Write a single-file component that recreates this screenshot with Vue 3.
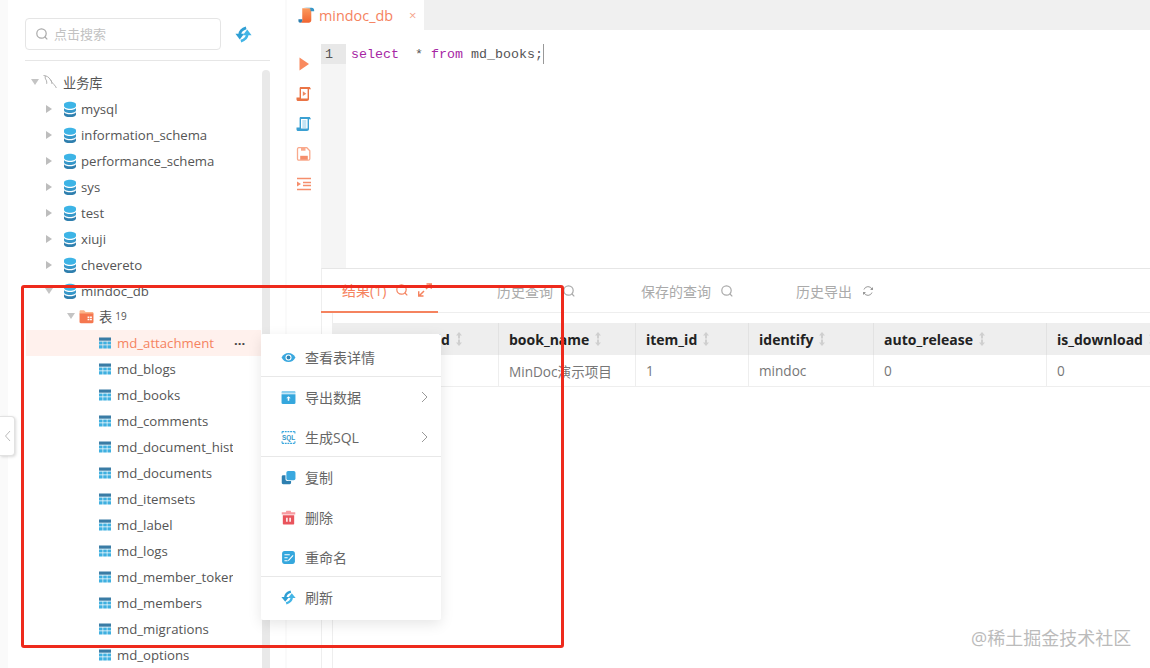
<script setup>
const tables = ['md_attachment', 'md_blogs', 'md_books', 'md_comments', 'md_document_history', 'md_documents', 'md_itemsets', 'md_label', 'md_logs', 'md_member_token', 'md_members', 'md_migrations', 'md_options']
const databases = ['mysql', 'information_schema', 'performance_schema', 'sys', 'test', 'xiuji', 'chevereto']

const menu = [
  [{ icon: 'i-eye', label: '查看表详情' }],
  [{ icon: 'i-export', label: '导出数据', more: true }, { icon: 'i-sql', label: '生成SQL', more: true }],
  [{ icon: 'i-copy', label: '复制' }, { icon: 'i-trash', label: '删除' }, { icon: 'i-rename', label: '重命名' }],
  [{ icon: 'i-sync', label: '刷新' }]
]

const tools = ['i-play', 'i-scroll-run', 'i-scroll-doc', 'i-save', 'i-format']

const resultTabs = [
  { label: '结果(1)', icons: ['i-search', 'i-expand'], active: true },
  { label: '历史查询', icons: ['i-search'] },
  { label: '保存的查询', icons: ['i-search'] },
  { label: '历史导出', icons: ['i-reload'] }
]

const columns = [
  { name: 'book_id', value: '' },
  { name: 'book_name', value: 'MinDoc演示项目' },
  { name: 'item_id', value: '1' },
  { name: 'identify', value: 'mindoc' },
  { name: 'auto_release', value: '0' },
  { name: 'is_download', value: '0' }
]
</script>

<template>
  <div class="page">
    <svg class="sprites" width="0" height="0">
      <defs>
        <linearGradient id="g-scroll" x1="0" y1="0" x2="0" y2="1">
          <stop offset="0" stop-color="#fb9a5d" />
          <stop offset="1" stop-color="#f0632f" />
        </linearGradient>
        <symbol id="i-db" viewBox="0 0 14 16">
          <path d="M1 3.400C1 1.800 3.700.7 7 .7s6 1.100 6 2.700v1.700C13 6.700 10.300 7.800 7 7.800S1 6.700 1 5.100z" fill="#3db4e6" />
          <path d="M1 7.100c1 1.400 3.300 2 6 2s5-.6 6-2v2.200C13 11 10.300 12 7 12s-6-1-6-2.700z" fill="#3597c9" />
          <path d="M1 11.200c1 1.400 3.300 2 6 2s5-.6 6-2v2.200C13 15 10.300 16 7 16s-6-1-6-2.600z" fill="#2f7fae" />
        </symbol>
        <symbol id="i-table" viewBox="0 0 12 12">
          <rect x="0" y="0.500" width="12" height="3.200" fill="#3a7ca5" />
          <path d="M0 4.600h3.600v3H0zM4.200 4.600h3.600v3H4.200zM8.400 4.600H12v3H8.400zM0 8.300h3.600v3.200H0zM4.200 8.300h3.600v3.200H4.200zM8.400 8.300H12v3.200H8.400z" fill="#3fb0e0" />
        </symbol>
        <symbol id="i-folder" viewBox="0 0 14 14">
          <path d="M.5 2.500c0-.8.5-1.300 1.200-1.300h3l1.500 1.500h6c.8 0 1.300.5 1.300 1.200V5H.5z" fill="#fbb48b" />
          <path d="M.5 4.300h13v7.900c0 .7-.5 1.100-1.200 1.100H1.700c-.7 0-1.200-.4-1.200-1.100z" fill="#f5774f" />
          <path d="M8 7h1.700v1.500H8zM10.300 7H12v1.500h-1.700zM8 9.100h1.700v1.500H8zM10.300 9.100H12v1.500h-1.700z" fill="#fff" />
        </symbol>
        <symbol id="i-dolphin" viewBox="0 0 16 16">
          <path d="M1.500 1.500c3 .2 5.300 1.500 6.800 4 1 1.800 2 3.700 3.700 5.200M3.500 1.800c-.7 1.600-.3 3 .8 4.400.5 1.300.6 2.400.4 3.600M8.300 5.500c1.200 1.300 1.600 2.700 1.400 4.200M12 10.700c1 .7 1.600 1.600 2.300 3.300" fill="none" stroke="#a8a8a8" stroke-width=".9" />
        </symbol>
        <symbol id="i-sync" viewBox="0 0 16 16">
          <path d="M10.500 1.800C7 2.800 4.800 4.500 4.500 8" fill="none" stroke="#2f9fd4" stroke-width="2.600" />
          <path d="M.4 7.400h8.200L4.500 12.600z" fill="#2f9fd4" />
          <path d="M5.500 14.200C9 13.200 11.200 11.500 11.500 8" fill="none" stroke="#43b5e6" stroke-width="2.600" />
          <path d="M7.400 8.600h8.200L11.500 3.400z" fill="#43b5e6" />
        </symbol>
        <symbol id="i-eye" viewBox="0 0 14 14">
          <path d="M.5 7C2 4.200 4.200 2.800 7 2.800S12 4.200 13.500 7C12 9.800 9.800 11.200 7 11.200S2 9.800.5 7z" fill="#3aa8df" />
          <circle cx="7" cy="7" r="2.800" fill="#fff" />
          <circle cx="7" cy="7" r="1.800" fill="#2c84b6" />
        </symbol>
        <symbol id="i-export" viewBox="0 0 14 14">
          <path d="M1.500 1h11c.6 0 1 .4 1 1v1.300H.5V2c0-.6.4-1 1-1z" fill="#8ed0ef" />
          <path d="M.5 4h13v8c0 .6-.4 1-1 1h-11c-.6 0-1-.4-1-1z" fill="#35a7dd" />
          <path d="M6.300 10V7.800H4.900L7 5.800l2.100 2H7.700V10z" fill="#fff" />
        </symbol>
        <symbol id="i-sql" viewBox="0 0 14 14">
          <path d="M1 1.500h12M1 12.500h12M1 1.500v2M13 1.500v2M1 10.500v2M13 10.500v2" fill="none" stroke="#3aa8df" stroke-width="1" stroke-dasharray="1.800 .7" />
          <text x="7" y="9.200" text-anchor="middle" font-family="Liberation Sans, sans-serif" font-size="6" font-weight="700" fill="#3597c9">SQL</text>
        </symbol>
        <symbol id="i-copy" viewBox="0 0 14 14">
          <rect x="5" y="1" width="8.500" height="8.500" rx="1.600" fill="#3aa8df" />
          <path d="M2 5h2.200v3.500c0 1.200.6 1.800 1.800 1.800h3.400V12c0 .7-.5 1.200-1.200 1.200H2c-.8 0-1.300-.5-1.300-1.200V6.300C.7 5.500 1.200 5 2 5z" fill="#2d7fb0" />
        </symbol>
        <symbol id="i-trash" viewBox="0 0 14 14">
          <path d="M5 .8h4l.5 1.200h3.800v2.300H.7V2h3.800z" fill="#f79aa0" />
          <path d="M1.700 5h10.600v7.500c0 .6-.4 1-1 1H2.700c-.6 0-1-.4-1-1z" fill="#e9545c" />
          <path d="M4.800 7.300h1.400v3.600H4.800zM7.800 7.300h1.400v3.600H7.800z" fill="#fff" />
        </symbol>
        <symbol id="i-rename" viewBox="0 0 14 14">
          <rect x="1" y="1" width="12" height="12" rx="2.400" fill="#35a7dd" />
          <path d="M3.200 4.500h5M3.200 7.200h3M3.200 10h3M6.800 10l4.500-5" fill="none" stroke="#fff" stroke-width="1" />
        </symbol>
        <symbol id="i-file" viewBox="0 0 16 16">
          <path d="M4 1.200h8.500v11.300c0 1.400-1 2.300-2.300 2.300H2C3.300 14.800 4 14 4 12.800z" fill="url(#g-scroll)" />
          <path d="M5 .8h8c1.300 0 2.200.9 2.200 2.200v1h-3.400V2.400c0-.5-.3-1-.8-1.200z" fill="#3597c9" />
          <path d="M.4 11.500H4v1.300c0 1.200-.7 2-2 2-.9 0-1.700-.6-1.600-1.800z" fill="#2f7fae" />
        </symbol>
        <symbol id="i-play" viewBox="0 0 16 16">
          <path d="M3.500 1.500 13 8l-9.500 6.500z" fill="#f98a5f" />
        </symbol>
        <symbol id="i-scroll-run" viewBox="0 0 16 16">
          <path d="M4.500 1h9.300l1.200 2.200h-2v9.800c0 1.200-.8 2-2 2H2c-.9 0-1.500-.6-1.500-1.500V11.500h3.100V2.500c0-.9.300-1.500.9-1.500z" fill="#ea7445" />
          <path d="M5 3h6.600v9.500H5z" fill="#fff" />
          <path d="M6.800 5.300 10.300 7.700l-3.500 2.400z" fill="#ee8a63" />
        </symbol>
        <symbol id="i-scroll-doc" viewBox="0 0 16 16">
          <path d="M4.500 1h9.300l1.200 2.200h-2v9.800c0 1.200-.8 2-2 2H2c-.9 0-1.500-.6-1.500-1.500V11.500h3.100V2.500c0-.9.300-1.500.9-1.500z" fill="#3ba0d2" />
          <path d="M5 3h6.600v9.500H5z" fill="#fff" />
          <path d="M6.300 5h4M6.300 7h4M6.300 9h4M6.300 11h4" stroke="#7cc3e6" stroke-width=".9" />
        </symbol>
        <symbol id="i-save" viewBox="0 0 16 16">
          <path d="M2.800 1.700h8l3 3v8c0 .9-.6 1.500-1.400 1.500H2.800c-.8 0-1.300-.6-1.300-1.500V3.200c0-.9.500-1.500 1.300-1.500z" fill="#fff" stroke="#f9a98c" stroke-width="1.300" />
          <path d="M5 2h4.500v2.700H5z" fill="#f9a98c" />
          <path d="M4.200 9.800h7.600v4H4.200z" fill="#f58e6c" />
        </symbol>
        <symbol id="i-format" viewBox="0 0 16 16">
          <path d="M1 2.500h14M7 6.500h8M7 9.500h8M1 13.500h14" stroke="#f58e6c" stroke-width="1.500" />
          <path d="M1 5.500 5 8l-4 2.500z" fill="#f58e6c" />
        </symbol>
        <symbol id="i-search" viewBox="0 0 14 14">
          <circle cx="6.500" cy="6.500" r="4.700" fill="none" stroke="currentColor" stroke-width="1.200" />
          <path d="M10 10l2.300 2.300" stroke="currentColor" stroke-width="1.200" />
        </symbol>
        <symbol id="i-expand" viewBox="0 0 14 14">
          <path d="M8 6l4.500-4.500M8.500 1h4.800v4.800M6 8l-4.500 4.500M.7 8.200V13h4.800" fill="none" stroke="#f5835f" stroke-width="1.500" />
        </symbol>
        <symbol id="i-reload" viewBox="0 0 14 14">
          <path d="M11 5.200A4.300 4.300 0 0 0 3 5.500M3 8.800a4.300 4.300 0 0 0 8-.3" fill="none" stroke="#999" stroke-width="1" />
          <path d="M12 3v3H9zM2 11V8h3z" fill="#999" />
        </symbol>
        <symbol id="i-sort" viewBox="0 0 8 16">
          <path d="M4 1 7 4.500H5V7.500H3V4.500H1zM3 8.500h2v3h2L4 15l-3-3.500h2z" fill="#cfcfcf" />
        </symbol>
      </defs>
    </svg>

    <aside class="sidebar">
      <div class="search-row">
        <div class="search-box">
          <svg class="search-icon"><use href="#i-search" /></svg>
          <span>点击搜索</span>
        </div>
        <svg class="sync"><use href="#i-sync" /></svg>
      </div>

      <div class="tree-wrap">
        <div class="tree">
          <div class="row lv0">
            <i class="caret down"></i>
            <svg class="ico"><use href="#i-dolphin" /></svg>
            <span class="name">业务库</span>
          </div>
          <div v-for="db in databases" :key="db" class="row lv1">
            <i class="caret"></i>
            <svg class="ico"><use href="#i-db" /></svg>
            <span class="name">{{ db }}</span>
          </div>
          <div class="row lv1">
            <i class="caret down"></i>
            <svg class="ico"><use href="#i-db" /></svg>
            <span class="name">mindoc_db</span>
          </div>
          <div class="row lv2">
            <i class="caret down"></i>
            <svg class="ico"><use href="#i-folder" /></svg>
            <span class="name">表</span>
            <span class="count">19</span>
          </div>
          <div v-for="(t, i) in tables" :key="t" :class="['row', 'lv3', { active: i === 0 }]">
            <svg class="ico"><use href="#i-table" /></svg>
            <span class="name">{{ t }}</span>
            <span v-if="i === 0" class="dots">···</span>
          </div>
        </div>
        <div class="scroll-thumb"></div>
      </div>
    </aside>

    <main class="main">
      <div class="tabbar">
        <div class="file-tab">
          <svg class="file-ico"><use href="#i-file" /></svg>
          <span>mindoc_db</span>
          <span class="close">×</span>
        </div>
      </div>

      <div class="editor">
        <div class="tools">
          <svg v-for="t in tools" :key="t" class="tool"><use :href="`#${t}`" /></svg>
        </div>
        <div class="gutter"><div class="line-no">1</div></div>
        <div class="code">
          <span class="kw">select</span>&nbsp;&nbsp;* <span class="kw">from</span> md_books;<span class="cursor"></span>
        </div>
      </div>

      <div class="results">
        <div class="res-tabs">
          <div v-for="tab in resultTabs" :key="tab.label" :class="['res-tab', { active: tab.active }]">
            <span>{{ tab.label }}</span>
            <svg v-for="ic in tab.icons" :key="ic" class="res-ico"><use :href="`#${ic}`" /></svg>
          </div>
        </div>
        <div class="table-wrap">
          <div class="grid">
            <div v-for="c in columns" :key="c.name" class="th">
              <span>{{ c.name }}</span>
              <svg class="sort"><use href="#i-sort" /></svg>
            </div>
            <div v-for="c in columns" :key="c.name + '-v'" class="td">{{ c.value }}</div>
          </div>
        </div>
      </div>
    </main>

    <div class="collapse-handle">
      <svg width="7" height="14" viewBox="0 0 7 14"><path d="M6 2 1.500 7 6 12" fill="none" stroke="#bbb" /></svg>
    </div>

    <div class="context-menu">
      <div v-for="(group, g) in menu" :key="g" class="menu-group">
        <div v-for="item in group" :key="item.label" class="menu-item">
          <svg class="menu-ico"><use :href="`#${item.icon}`" /></svg>
          <span>{{ item.label }}</span>
          <svg v-if="item.more" class="menu-more" viewBox="0 0 7 12"><path d="M1 1l5 5-5 5" fill="none" stroke="#999" /></svg>
        </div>
      </div>
    </div>

    <div class="red-box"></div>
    <div class="watermark">@稀土掘金技术社区</div>
  </div>
</template>

<style>
html, body {
  margin: 0;
  background: #fff;
}
</style>

<style scoped>
.page {
  position: relative;
  display: flex;
  width: 1150px;
  height: 668px;
  overflow: hidden;
  background: #fafafa;
  font-family: "Open Sans", "Noto Sans CJK SC", sans-serif;
  font-size: 13.2px;
  color: #555;
}

.sprites {
  position: absolute;
}

.sidebar {
  width: 277px;
  margin-left: 8px;
  background: #fff;
  flex-shrink: 0;
}

.search-row {
  display: flex;
  align-items: center;
  width: 245px;
  height: 43px;
  margin: 18px 0 0 17px;
  padding-bottom: 10px;
  box-sizing: border-box;
  border-bottom: 1px solid #e6e6e6;
}

.search-box {
  display: flex;
  align-items: center;
  width: 196px;
  height: 32px;
  box-sizing: border-box;
  padding-left: 9px;
  border: 1px solid #e5e5e5;
  border-radius: 4px;
  color: #c2c2c2;
  font-size: 13px;
  line-height: 28px;
}

.search-icon {
  width: 14px;
  height: 14px;
  margin-right: 5px;
  color: #aaa;
}

.sync {
  width: 17px;
  height: 17px;
  margin-left: 14px;
}

.tree-wrap {
  display: flex;
  margin: 9px 0 0 18px;
}

.tree {
  width: 235px;
}

.scroll-thumb {
  width: 8px;
  height: 600px;
  margin-left: 1px;
  background: #e9e9e9;
  border-radius: 4px 4px 0 0;
}

.row {
  display: flex;
  align-items: center;
  height: 26px;
  white-space: nowrap;
}

.ico {
  flex-shrink: 0;
}

.caret {
  flex-shrink: 0;
  width: 0;
  height: 0;
  margin-left: 2px;
  margin-right: 2px;
  border-style: solid;
  border-width: 4px 0 4px 6px;
  border-color: transparent transparent transparent #bdbdbd;
}

.caret.down {
  margin: 0 1px;
  border-width: 6px 4px 0 4px;
  border-color: #c4c4c4 transparent transparent transparent;
}

.lv0 {
  padding-left: 4px;
  padding-bottom: 2px;
  box-sizing: border-box;
}
.lv0 .ico {
  width: 16px;
  height: 16px;
  margin-left: 2px;
}
.lv0 .name {
  margin-left: 5px;
}

.lv1 {
  padding-left: 18px;
}
.lv1 .ico {
  width: 14px;
  height: 16px;
  margin-left: 9px;
}
.lv1 .name {
  margin-left: 4px;
}

.lv2 {
  padding-left: 40px;
  padding-bottom: 2px;
  box-sizing: border-box;
}
.lv2 .ico {
  width: 15px;
  height: 15px;
  margin-left: 3px;
}
.lv2 .name {
  margin-left: 5px;
}

.count {
  margin-left: 3px;
  font-size: 10px;
}

.lv3 {
  padding-left: 73px;
}
.lv3 .ico {
  width: 12px;
  height: 12px;
}
.lv3 .name {
  width: 116px;
  margin-left: 6px;
  overflow: hidden;
}

.row.active {
  background: #fff1ed;
}
.row.active .name {
  color: #f5835f;
}

.dots {
  margin-left: 1px;
  color: #444;
  font-weight: 700;
  font-size: 13px;
}

.main {
  display: flex;
  flex-direction: column;
  flex: 1;
  min-width: 0;
  margin-left: 2px;
  background: #fff;
}

.tabbar {
  height: 30px;
  background: #f0f0f0;
}

.file-tab {
  display: flex;
  align-items: center;
  width: 137px;
  height: 30px;
  padding-left: 11px;
  box-sizing: border-box;
  background: #fff;
  color: #f5835f;
  font-size: 14.4px;
}

.file-ico {
  width: 17px;
  height: 17px;
  margin-right: 4px;
}

.close {
  margin-left: 16px;
  color: #f5a58c;
  font-size: 13px;
}

.editor {
  display: flex;
  height: 238px;
  flex-shrink: 0;
  padding-top: 14px;
  box-sizing: border-box;
}

.tools {
  display: flex;
  flex-direction: column;
  align-items: center;
  gap: 14px;
  width: 34px;
  padding: 12px 0 0 0;
  box-sizing: border-box;
}

.tool {
  width: 16px;
  height: 16px;
  flex-shrink: 0;
}

.gutter {
  width: 25px;
  background: #f5f5f5;
}

.line-no {
  height: 20px;
  padding-left: 4px;
  background: #e8e8e8;
  font-family: "Liberation Mono", monospace;
  font-size: 13.33px;
  line-height: 22px;
}

.code {
  margin-left: 5px;
  height: 20px;
  font-family: "Liberation Mono", monospace;
  font-size: 13.33px;
  line-height: 22px;
  color: #555;
  white-space: pre;
}

.kw {
  color: #a626a4;
}

.cursor {
  display: inline-block;
  width: 1px;
  height: 20px;
  vertical-align: top;
  background: #999;
}

.results {
  display: flex;
  flex-direction: column;
  flex: 1;
  margin-left: 34px;
  border-top: 1px solid #e6e6e6;
  border-left: 1px solid #eee;
}

.res-tabs {
  display: flex;
  height: 44px;
  flex-shrink: 0;
  margin-left: -1px;
  box-sizing: border-box;
  border-bottom: 1px solid #eee;
}

.res-tab {
  display: flex;
  align-items: center;
  padding: 0 21px;
  margin-right: 24px;
  color: #aaa;
  font-size: 14px;
}

.res-tab:first-child {
  width: 117px;
  padding-right: 0;
  box-sizing: border-box;
  margin-right: 38px;
}

.res-tab:nth-child(2) {
  margin-right: 23px;
}

.res-tab:nth-child(3) {
  padding-right: 17px;
}

.res-tab.active {
  color: #f5835f;
  border-bottom: 2px solid #f5835f;
  margin-bottom: -1px;
}

.res-ico {
  width: 14px;
  height: 14px;
  margin-left: 9px;
}

.table-wrap {
  flex: 1;
  margin: 0 0 0 10px;
  padding-top: 10px;
  border-left: 1px solid #eee;
}

.grid {
  display: grid;
  grid-template-columns: 167px 137px 113px 125px 173px 1fr;
  grid-template-rows: 32px 32px;
  margin-left: -1px;
}

.th {
  display: flex;
  align-items: center;
  padding-left: 10px;
  background: #eee;
  border-right: 1px solid #e2e2e2;
  color: #222;
  font-size: 14px;
  font-weight: 700;
}

.th:first-child {
  padding-left: 64px;
}

.sort {
  width: 8px;
  height: 16px;
  margin-left: 5px;
}

.td {
  display: flex;
  align-items: center;
  padding-left: 10px;
  border-right: 1px solid #eee;
  border-bottom: 1px solid #eee;
  color: #777;
  font-size: 13.6px;
}

.collapse-handle {
  position: absolute;
  left: 0;
  top: 416px;
  display: flex;
  align-items: center;
  justify-content: center;
  width: 15px;
  height: 40px;
  box-sizing: border-box;
  background: #fff;
  border: 1px solid #e2e2e2;
  border-left: none;
  border-radius: 0 4px 4px 0;
  box-shadow: 1px 1px 3px rgba(0, 0, 0, 0.15);
}

.context-menu {
  position: absolute;
  left: 261px;
  top: 334px;
  width: 180px;
  height: 286px;
  box-sizing: border-box;
  padding-top: 3px;
  background: #fff;
  border-radius: 2px;
  box-shadow: 0 4px 14px rgba(0, 0, 0, 0.1);
  font-size: 14px;
  color: #666;
}

.menu-group + .menu-group {
  margin-top: -1px;
  border-top: 1px solid #e8e8e8;
}

.menu-item {
  display: flex;
  align-items: center;
  height: 40px;
  padding-left: 20px;
}

.menu-ico {
  width: 15px;
  height: 15px;
  margin-right: 9px;
}

.menu-more {
  width: 7px;
  height: 12px;
  margin-left: auto;
  margin-right: 13px;
}

.red-box {
  position: absolute;
  left: 21px;
  top: 285px;
  width: 543px;
  height: 363px;
  box-sizing: border-box;
  border: 3px solid #ee2a1c;
  border-radius: 3px;
  pointer-events: none;
}

.watermark {
  position: absolute;
  left: 971px;
  top: 626px;
  font-size: 18px;
  line-height: 24px;
  color: #bbb;
  white-space: nowrap;
}
</style>
